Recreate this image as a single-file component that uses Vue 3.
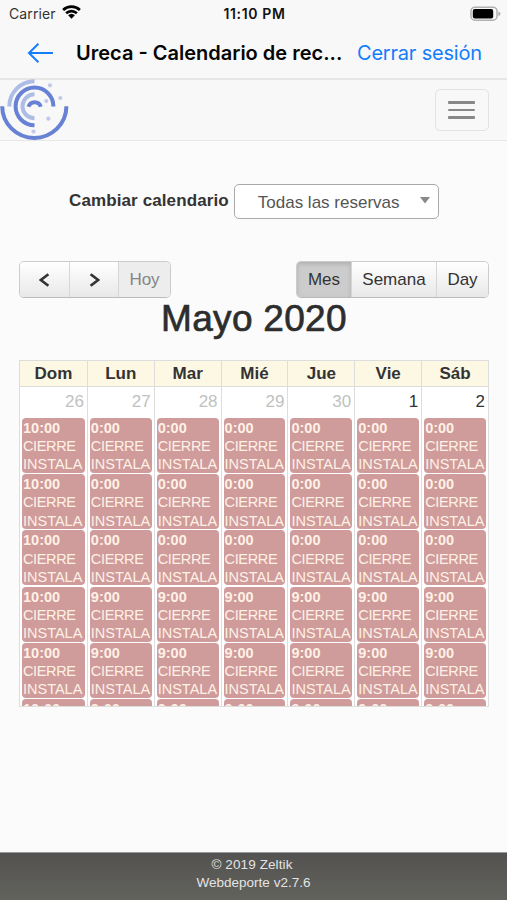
<template>
  <div class="screen">
    <div class="status-bar">
      <div class="carrier">
        <span>Carrier</span>
        <svg class="wifi" width="21" height="16" viewBox="0 0 20 15">
          <path d="M2 5.6 A11.5 11.5 0 0 1 18 5.6" />
          <path d="M4.9 8.7 A7.4 7.4 0 0 1 15.1 8.7" />
          <path class="wifi-dot" d="M6.8 10.6 A4.7 4.7 0 0 1 13.2 10.6 L10 14 Z" />
        </svg>
      </div>
      <div class="clock">11:10 PM</div>
      <div class="battery-wrap">
        <svg width="31" height="16" viewBox="0 0 31 16">
          <rect x="1" y="1.2" width="26" height="13" rx="4" fill="none" stroke="#b0b0b0" stroke-width="1.5" />
          <rect x="2.8" y="3" width="20.4" height="9.4" rx="2" fill="#000" />
          <path d="M28.3 5.4 Q30.6 6 30.6 7.7 Q30.6 9.4 28.3 10 Z" fill="#b0b0b0" />
        </svg>
      </div>
    </div>

    <div class="title-bar">
      <svg class="back" width="28" height="22" viewBox="0 0 28 22">
        <path d="M26 11 H2 M11.4 1.8 L2 11 L11.4 20.2" />
      </svg>
      <div class="page-title">Ureca - Calendario de rec...</div>
      <div class="logout">Cerrar sesión</div>
    </div>

    <div class="navbar">
      <svg class="logo" width="70" height="62" viewBox="0 0 70 62">
        <g fill="none" stroke-width="4">
          <path d="M9.3 27.5 A25.2 25.2 0 0 1 34.5 2.3" stroke="#aebde5" />
          <path d="M34.5 15.3 A12 12 0 0 0 34.5 39.3" stroke="#aebde5" />
          <path d="M34.5 46.3 A18.9 18.9 0 1 1 53.4 27.5" stroke="#6781d4" />
          <path d="M28.5 27.8 A6.4 6.4 0 0 1 40.8 27.8" stroke="#6781d4" />
          <path d="M2.2 27.3 A32 31.5 0 0 0 66.4 27.3" stroke="#6781d4" />
        </g>
        <circle v-for="dot in logoDots" :key="dot.x" :cx="dot.x" :cy="dot.y" r="2.1" fill="#c5c8ea" />
      </svg>
      <div class="menu-toggle">
        <span></span>
        <span></span>
        <span></span>
      </div>
    </div>

    <div class="content">
      <div class="picker">
        <span class="picker-label">Cambiar calendario</span>
        <div class="select">
          <span>Todas las reservas</span>
          <svg width="10" height="7" viewBox="0 0 10 7"><path d="M0 0 H10 L5 6.5 Z" fill="#888" /></svg>
        </div>
      </div>

      <div class="toolbar">
        <div class="button-group">
          <div class="button arrow">
            <svg width="12" height="16" viewBox="0 0 12 16"><path d="M9.4 2.2 L1.8 8 L9.4 13.8" /></svg>
          </div>
          <div class="button arrow">
            <svg width="12" height="16" viewBox="0 0 12 16"><path d="M2.6 2.2 L10.2 8 L2.6 13.8" /></svg>
          </div>
          <div class="button today">Hoy</div>
        </div>
        <div class="button-group">
          <div class="button month active">Mes</div>
          <div class="button week">Semana</div>
          <div class="button day-view">Day</div>
        </div>
      </div>
      <h2>Mayo 2020</h2>

      <div class="calendar">
        <div v-for="(day, i) in days" :key="day.name" class="column">
          <div class="day-name">{{ day.name }}</div>
          <div class="day-number" :class="{ other: day.other }">{{ day.number }}</div>
          <div v-for="(time, n) in (i === 0 ? sundayTimes : times)" :key="n" class="event">
            <div class="time">{{ time }}</div>
            <template v-if="n < 5">
              <div class="reason">CIERRE</div>
              <div>INSTALA</div>
            </template>
          </div>
        </div>
      </div>
    </div>

    <div class="footer">
      <div class="copyright">© 2019 Zeltik</div>
      <div>Webdeporte v2.7.6</div>
    </div>
  </div>
</template>

<script setup>
const days = [
  { name: 'Dom', number: 26, other: true },
  { name: 'Lun', number: 27, other: true },
  { name: 'Mar', number: 28, other: true },
  { name: 'Mié', number: 29, other: true },
  { name: 'Jue', number: 30, other: true },
  { name: 'Vie', number: 1 },
  { name: 'Sáb', number: 2 }
];

const sundayTimes = ['10:00', '10:00', '10:00', '10:00', '10:00', '10:00'];
const times = ['0:00', '0:00', '0:00', '9:00', '9:00', '9:00'];

const logoDots = [
  { x: 50, y: 6.3 },
  { x: 60.3, y: 19 },
  { x: 46.3, y: 22 },
  { x: 48.4, y: 39.7 },
  { x: 33.5, y: 52.5 }
];
</script>

<style>
body {
  margin: 0;
  background: #fbfbfb;
}
</style>

<style scoped>
.screen {
  display: flex;
  flex-direction: column;
  width: 507px;
  height: 900px;
  overflow: hidden;
  background: #fbfbfb;
  color: #333;
  font-family: "Liberation Sans", Arial, sans-serif;
  font-size: 17px;
  white-space: nowrap;
}

.screen * {
  box-sizing: border-box;
}

.status-bar {
  display: grid;
  grid-template-columns: 1fr auto 1fr;
  align-items: center;
  height: 27px;
  padding: 0 7px 0 9px;
  background: #f8f8f8;
  color: #111;
  font-family: Inter, sans-serif;
  font-size: 14px;
}

.carrier {
  display: flex;
  align-items: center;
  gap: 5px;
  color: #333;
  letter-spacing: 0.1px;
}

.wifi {
  margin-top: -3px;
  fill: none;
  stroke: #000;
  stroke-width: 2.5;
}

.wifi-dot {
  fill: #000;
  stroke: none;
}

.clock {
  font-weight: 600;
  letter-spacing: 0.65px;
}

.battery-wrap {
  display: flex;
  justify-content: flex-end;
  margin-right: -1px;
}

.title-bar {
  display: flex;
  align-items: center;
  height: 53px;
  padding: 0 25px 0 27px;
  background: #f8f8f8;
  border-bottom: 2px solid #e6e6e6;
  font-family: Inter, sans-serif;
  font-size: 20px;
}

.back {
  flex: none;
  fill: none;
  stroke: #147efb;
  stroke-width: 2;
}

.page-title {
  flex: none;
  width: 302px;
  padding-left: 21px;
  color: #050505;
  font-weight: 600;
}

.logout {
  color: #147efb;
  letter-spacing: -0.2px;
}

.navbar {
  display: flex;
  justify-content: space-between;
  align-items: center;
  height: 61px;
  padding-right: 18px;
  background: #f8f8f8;
  border-bottom: 1px solid #e7e7e7;
}

.logo {
  align-self: flex-start;
  margin-top: -1px;
}

.menu-toggle {
  display: flex;
  flex-direction: column;
  align-items: center;
  justify-content: center;
  gap: 5px;
  width: 54px;
  height: 42px;
  padding-right: 1px;
  border: 1.5px solid #e2e2e2;
  border-radius: 5px;
}

.menu-toggle span {
  width: 27px;
  height: 2.4px;
  border-radius: 1px;
  background: #888;
}

.content {
  flex: 1;
  padding: 43px 18px 0 19px;
}

.picker {
  display: flex;
  align-items: center;
  gap: 5px;
  padding-left: 50px;
}

.picker-label {
  padding-bottom: 2px;
  font-weight: bold;
  letter-spacing: 0.11px;
}

.select {
  display: flex;
  align-items: center;
  justify-content: space-between;
  width: 205px;
  height: 35px;
  padding: 3px 8px 0 23px;
  background: #fff;
  border: 1px solid #aaa;
  border-radius: 5px;
  color: #555;
}

.select svg {
  margin-top: -5px;
}

.toolbar {
  display: flex;
  justify-content: space-between;
  margin-top: 42px;
}

.button-group {
  display: flex;
  height: 37px;
  border: 1px solid #ccc;
  border-bottom-color: #bbb;
  border-radius: 5px;
  overflow: hidden;
}

.button {
  display: flex;
  align-items: center;
  justify-content: center;
  background: linear-gradient(#fff, #e8e8e8);
  color: #333;
}

.button + .button {
  border-left: 1px solid #d6d6d6;
}

.arrow {
  width: 49px;
}

.arrow svg {
  fill: none;
  stroke: #333;
  stroke-width: 2.7;
}

.today {
  width: 52px;
  background: #ededed;
  color: #858585;
}

.month {
  width: 54px;
}

.week {
  width: 85px;
}

.day-view {
  width: 52px;
}

.active {
  background: #ccc;
  box-shadow: inset 0 2px 4px rgba(0, 0, 0, 0.15);
}

h2 {
  margin: 0;
  height: 62px;
  color: #2d2d2d;
  font-size: 37px;
  font-weight: normal;
  letter-spacing: 0.3px;
  line-height: 42px;
  text-align: center;
  -webkit-text-stroke: 0.7px #2d2d2d;
}

.calendar {
  display: grid;
  grid-template-columns: repeat(7, 1fr);
  height: 347px;
  overflow: hidden;
  background: #fff;
  border: 1px solid #ddd;
}

.column {
  min-width: 0;
  padding-right: 2px;
}

.column + .column {
  border-left: 1px solid #ddd;
}

.day-name {
  height: 26px;
  margin-right: -2px;
  background: #fdf8e4;
  border-bottom: 1px solid #ddd;
  font-weight: bold;
  line-height: 26px;
  text-align: center;
}

.day-number {
  height: 31px;
  padding-right: 1px;
  line-height: 30px;
  text-align: right;
}

.other {
  color: #c1c1c1;
}

.event {
  height: 55px;
  margin: 0 0 1.2px 2px;
  padding: 1px 1px 0;
  overflow: hidden;
  background: #cf9c9b;
  border-radius: 4px;
  color: #fff1e6;
  font-size: 14.5px;
  line-height: 18.2px;
}

.time {
  font-weight: bold;
}

.reason {
  letter-spacing: -0.35px;
}

.footer {
  height: 48px;
  padding-top: 3px;
  background: linear-gradient(#535250, #62625d);
  border-top: 1px solid #999;
  color: #e4e4e4;
  font-size: 13.5px;
  line-height: 18px;
  text-align: center;
}

.copyright {
  padding-right: 3px;
  letter-spacing: 0.1px;
}
</style>
